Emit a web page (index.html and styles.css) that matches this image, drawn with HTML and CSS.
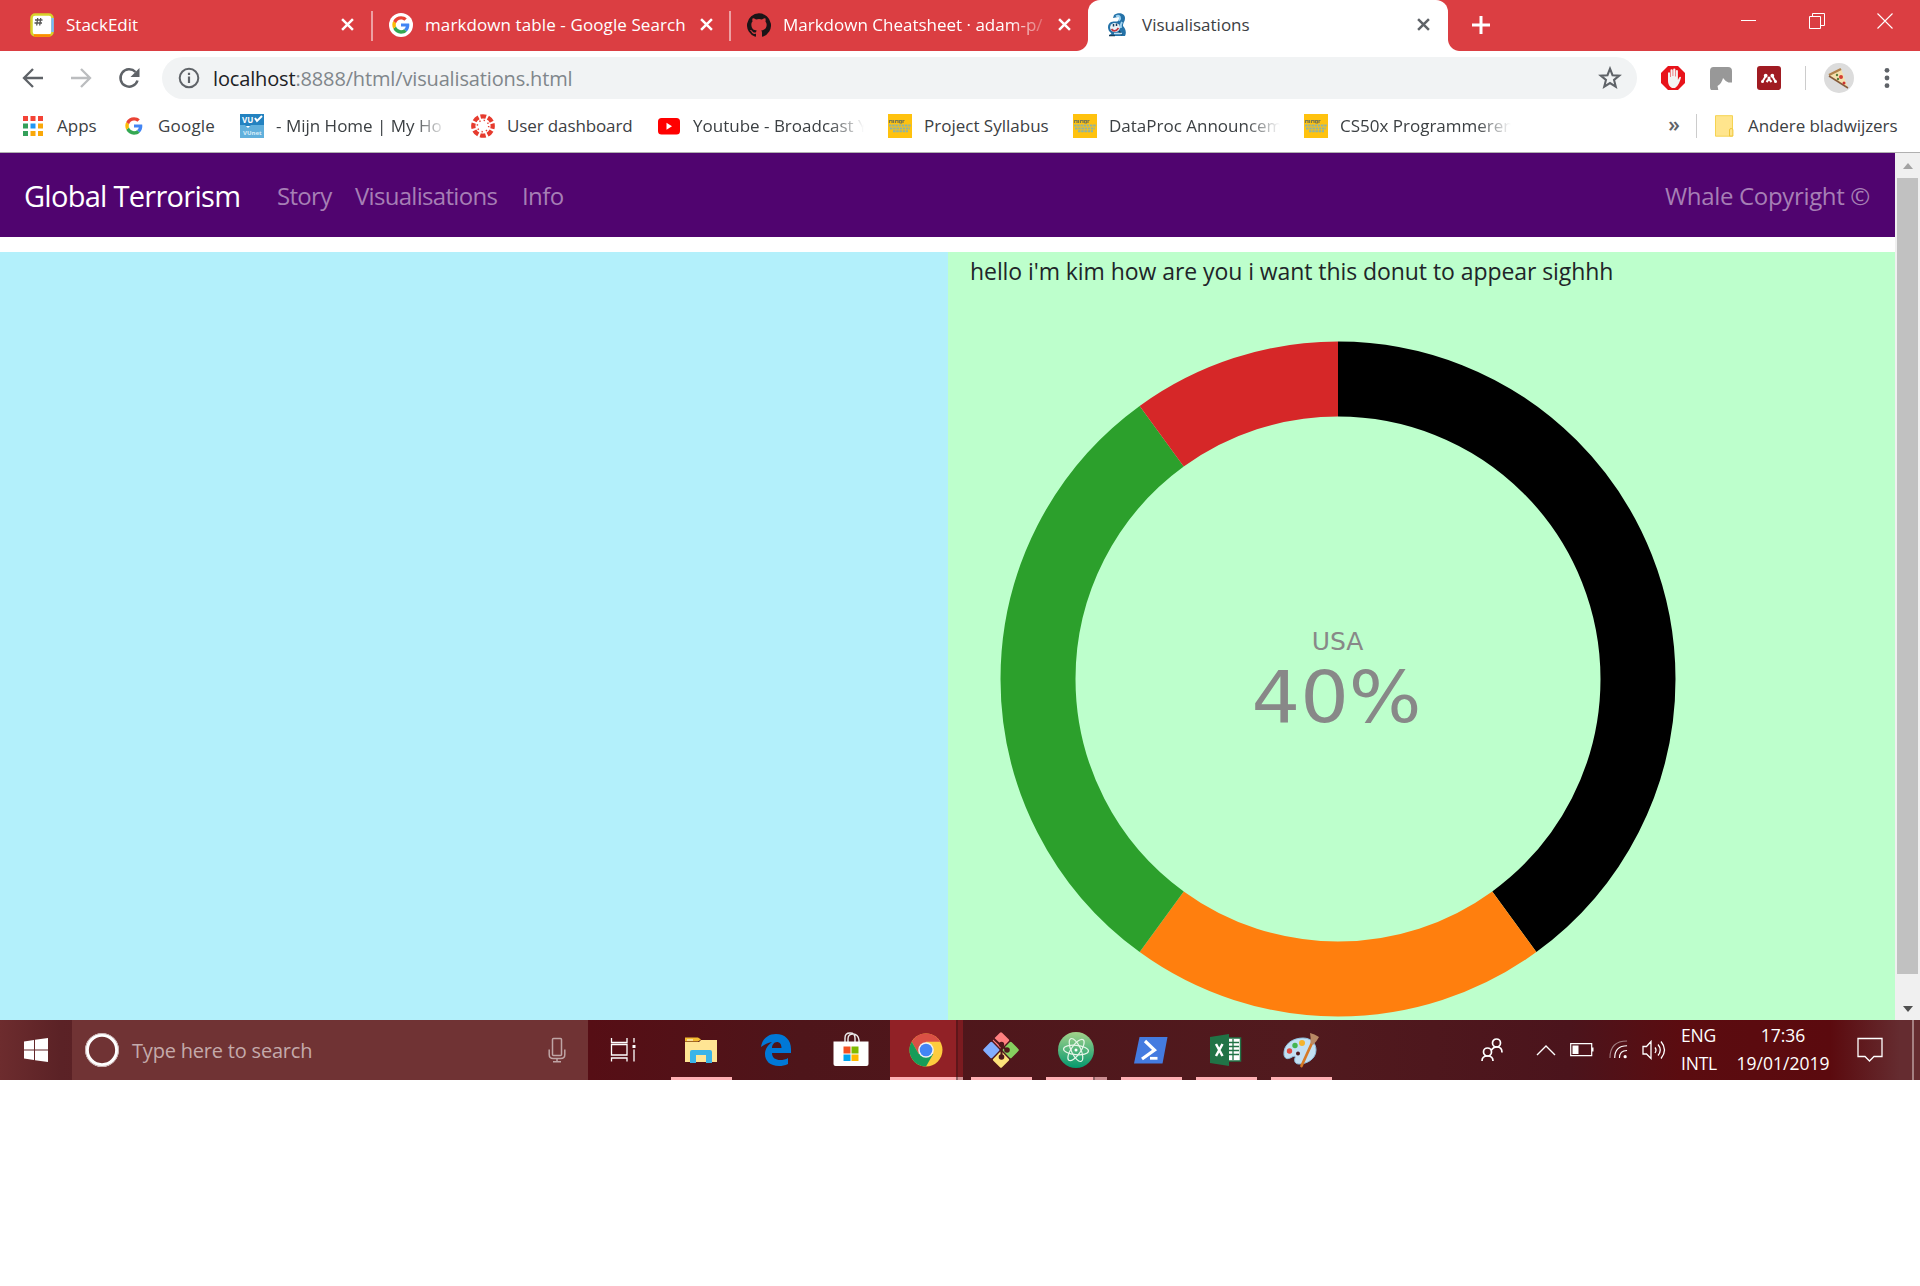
FILE: index.html
```html
<!DOCTYPE html>
<html lang="en">
<head>
<meta charset="utf-8">
<title>Visualisations</title>
<link rel="stylesheet" href="styles.css">
</head>
<body>
<svg class="defs" width="0" height="0">
  <defs>
    <symbol id="google" viewBox="0 0 48 48">
      <path fill="#4285f4" d="M45 24.500c0-1.600-.1-2.700-.4-4H24v7.500h12c-.3 2-1.600 4.900-4.500 6.900l6.900 5.400C42.600 36.500 45 31 45 24.500z"/>
      <path fill="#34a853" d="M24 46c6 0 11-2 14.500-5.700l-6.900-5.400c-1.900 1.300-4.300 2.200-7.600 2.200-5.800 0-10.700-3.900-12.500-9.200l-7.100 5.500C8 40.800 15.400 46 24 46z"/>
      <path fill="#fbbc05" d="M11.500 27.900c-.5-1.300-.7-2.800-.7-4.300s.3-2.900.7-4.300l-7.100-5.500C2.900 16.700 2 20 2 23.600s.9 6.900 2.400 9.800z"/>
      <path fill="#ea4335" d="M24 10.200c4.100 0 6.900 1.800 8.500 3.300l6.100-6C34.900 4 30 2 24 2 15.400 2 8 6.900 4.400 14l7.100 5.500C13.300 14.100 18.200 10.200 24 10.200z"/>
    </symbol>
    <symbol id="close" viewBox="0 0 12 12"><path d="M1 1l10 10M11 1L1 11" fill="none" stroke="currentColor" stroke-width="2.300"/></symbol>
    <symbol id="minor" viewBox="0 0 24 24">
      <path fill="#ffc20e" d="M0 0h24v24H0z"/>
      <path d="M1.500 9V6.500h2.500V9M5.500 6v3M7.500 9V6.500H10V9M11.500 9V6.500h2V9h-2M15 9V6.500h1.500" fill="none" stroke="#7d7a4c" stroke-width="1.200"/>
      <path d="M1 11.500h22M2 14.500h20M5 17.200h15" stroke="#8fb3a5" stroke-width="1.900" stroke-dasharray="2.500 .7"/>
    </symbol>
  </defs>
</svg>

<header class="tabs">
  <div class="tab">
    <svg class="fav" viewBox="0 0 24 24"><rect x="1.500" y="1.500" width="21" height="21" rx="3.500" fill="#fff" stroke="#d6d32b" stroke-width="2.500"/><path d="M22.500 5v14" stroke="#75b7fd" stroke-width="2.500"/><path d="M4 22.500h16.500" stroke="#ff8a00" stroke-width="2.500"/><path d="M5 7h7.500M4.500 10H12M7.700 5l-1 7.500M10.700 5l-1 7.500" stroke="#555" stroke-width="1.300"/></svg>
    <span class="title">StackEdit</span><svg class="x"><use href="#close"/></svg>
  </div>
  <div class="tab">
    <svg class="fav" viewBox="0 0 24 24"><circle cx="12" cy="12" r="12" fill="#fff"/><use href="#google" x="2.500" y="2.500" width="19" height="19"/></svg>
    <span class="title search-title">markdown table - Google Search</span><svg class="x"><use href="#close"/></svg>
  </div>
  <div class="tab last">
    <svg class="fav" viewBox="0 0 16 16"><path fill="#1b1417" d="M8 .2a8 8 0 0 0-2.500 15.600c.4.100.500-.2.500-.4v-1.500c-2 .4-2.600-.5-2.800-1-.1-.2-.5-.9-.8-1.100-.3-.2-.7-.5 0-.5.600 0 1.100.6 1.200.8.700 1.200 1.900.9 2.400.7.100-.5.300-.9.500-1.100-1.800-.2-3.600-.9-3.600-4 0-.9.300-1.600.8-2.100-.1-.2-.4-1 .1-2.100 0 0 .7-.2 2.200.8a7.400 7.400 0 0 1 4 0c1.500-1 2.200-.8 2.200-.8.400 1.100.2 1.900.1 2.100.5.600.8 1.300.8 2.100 0 3.100-1.900 3.700-3.700 4 .3.200.6.700.6 1.500v2.200c0 .2.100.5.500.4A8 8 0 0 0 8 .2z"/></svg>
    <span class="title fade-title">Markdown Cheatsheet · adam-p/</span><svg class="x"><use href="#close"/></svg>
  </div>
  <div class="tab active">
    <svg class="fav" viewBox="0 0 24 24"><path d="M8 2c4-3 11-2 11 3 0 4-2 4-2 8 2 2 4 6 2 10H3c1-2 3-2 2-3-4-3-4-9 0-11 4-1 6 0 7-1 2-2 2-4 0-4S9 5 7 5z" fill="#2472a8"/><path d="M10 3.500c4-2 5 2 3 4M16 9q-2 3-1 6" stroke="#9fd3f2" stroke-width="2" fill="none"/><ellipse cx="9" cy="14.500" rx="5" ry="4.500" fill="#e8f2f7"/><path d="M5.500 16c2 3 5 2 7-1" stroke="#c2343d" stroke-width="1.700" fill="none"/><path d="M7.500 11v2.500M10.500 10.500v2.500M3 22.500h6M13 18l3 4" stroke="#173e5c" stroke-width="1.500"/><path d="M8 20.500h8" stroke="#bfe0f3" stroke-width="1.500"/></svg>
    <span class="title">Visualisations</span><svg class="x"><use href="#close"/></svg>
  </div>
  <div class="new-tab"><svg viewBox="0 0 18 18"><path d="M9 0v18M0 9h18" stroke="#fff" stroke-width="3"/></svg></div>
  <div class="window">
    <svg viewBox="0 0 16 16"><path d="M0 7.500h15" stroke="#fff"/></svg>
    <svg viewBox="0 0 16 16"><path d="M.5 3.500h11v12H.5zM3.500 3V.5h12v12H12" fill="none" stroke="#fff"/></svg>
    <svg viewBox="0 0 16 16"><path d="M.5 .5l15 15M15.500 .5l-15 15" stroke="#fff" stroke-width="1.100"/></svg>
  </div>
</header>

<div class="toolbar">
  <svg class="nav-icon" viewBox="0 0 24 24"><path d="M22 12H3.500M12 3l-9 9 9 9" fill="none" stroke="#5f6368" stroke-width="2.300"/></svg>
  <svg class="nav-icon" viewBox="0 0 24 24"><path d="M2 12h18.500M12 3l9 9-9 9" fill="none" stroke="#bbbdbf" stroke-width="2.300"/></svg>
  <svg class="nav-icon" viewBox="0 0 24 24"><path d="M20.500 14.500A8.700 8.700 0 1 1 18.500 6" fill="none" stroke="#5f6368" stroke-width="2.500"/><path d="M22.500 2v9h-9z" fill="#5f6368"/></svg>
  <div class="address">
    <svg class="info" viewBox="0 0 22 22"><circle cx="11" cy="11" r="9.300" fill="none" stroke="#5f6368" stroke-width="2"/><path d="M11 9.500v6.500M11 5.700v2.200" stroke="#5f6368" stroke-width="2.200"/></svg>
    <span class="url"><b>localhost</b>:8888/html/visualisations.html</span>
    <svg class="star" viewBox="0 0 22 22"><path d="M11 2.500l2.300 5.900 6.200.4-4.800 4 1.600 6.200L11 15.600 5.700 19l1.600-6.200-4.800-4 6.200-.4z" fill="none" stroke="#5f6368" stroke-width="1.900"/></svg>
  </div>
  <div class="extensions">
    <svg viewBox="0 0 24 24"><path d="M7 0h10l7 7v10l-7 7H7l-7-7V7z" fill="#e8131a"/><path d="M7 15V7.200a1 1 0 0 1 2 0V11h.5V4.300a1.100 1.100 0 0 1 2.200 0V10h.5V3.500a1.100 1.100 0 0 1 2.200 0V10.500h.5V5a1 1 0 0 1 2 0v9l1.300-2.500q1-1.200 1.800-.2-.6 3-2 6T14 22h-3q-4-2-4-7z" fill="#f4f4f4"/></svg>
    <svg viewBox="0 0 24 24"><path d="M4.500 1H19q4 0 4 4v11.500h-3.500q-3-1-5.500-4.500-1 5-5.500 8l1 5H5q-4 0-4-4V5q0-4 3.500-4z" fill="#989898"/></svg>
    <svg viewBox="0 0 24 24"><rect width="24" height="24" rx="3" fill="#a01b22"/><g fill="#fff"><circle cx="8.700" cy="9.700" r="1.900"/><circle cx="15.300" cy="9.700" r="1.900"/><circle cx="12" cy="12" r="1.500"/><circle cx="5.500" cy="15.500" r="1.500"/><circle cx="18.500" cy="15.500" r="1.500"/></g><path d="M5.500 15.500l3-5M18.500 15.500l-3-5M9.500 16l2.500-3 2.500 3" fill="none" stroke="#fff" stroke-width="2"/></svg>
    <i class="rule"></i>
    <svg class="avatar" viewBox="0 0 30 30"><circle cx="15" cy="15" r="15" fill="#dcdcdc"/><path d="M5 12l12-6 7 19z" fill="#f4e1ae"/><path d="M5 12l12-6" stroke="#b1834b" stroke-width="2.500"/><path d="M5 13l19 12" stroke="#865a39" stroke-width="1.500"/><circle cx="17" cy="14" r="2" fill="#d43d35"/><circle cx="20" cy="20" r="1.500" fill="#c33"/><circle cx="13" cy="12" r="1.200" fill="#597e3d"/><circle cx="14" cy="16" r="1.200" fill="#597e3d"/></svg>
    <svg class="dots" viewBox="0 0 6 22"><g fill="#5f6368"><circle cx="3" cy="3.300" r="2.400"/><circle cx="3" cy="11" r="2.400"/><circle cx="3" cy="18.700" r="2.400"/></g></svg>
  </div>
</div>

<nav class="bookmarks">
  <a><svg viewBox="0 0 24 24"><g><path fill="#f44336" d="M2 2h5v5H2zM9.500 2h5v5h-5zM17 2h5v5h-5z"/><path fill="#34a05a" d="M2 9.500h5v5H2zM2 17h5v5H2z"/><path fill="#2196f3" d="M9.500 9.500h5v5h-5z"/><path fill="#f9a80a" d="M17 9.500h5v5h-5zM9.500 17h5v5h-5zM17 17h5v5h-5z"/></g></svg><span>Apps</span></a>
  <a><svg viewBox="0 0 24 24"><use href="#google" x="2.500" y="2.500" width="19" height="19"/></svg><span class="wide">Google</span></a>
  <a class="fade"><svg viewBox="0 0 24 24"><path fill="#2382c0" d="M0 0h24v12H0z"/><path fill="#61b0dc" d="M0 11h5l3 3 3-3h13v13H0z"/><text x="2" y="8.500" class="vu">VU</text><path d="M15 4l2 3 5-5" stroke="#fff" stroke-width="2" fill="none"/><text x="3" y="20.500" class="vunet">VUnet</text></svg><span>- Mijn Home | My Ho</span></a>
  <a><svg viewBox="0 0 24 24"><circle cx="12" cy="12" r="9.700" fill="none" stroke="#e63b2e" stroke-width="4.300" stroke-dasharray="5.600 2.018" stroke-dashoffset="2.800"/><circle cx="12" cy="12" r="5.700" fill="none" stroke="#e63b2e" stroke-width="1.500" stroke-dasharray="1.300 3.177"/></svg><span class="tight">User dashboard</span></a>
  <a class="fade"><svg viewBox="0 0 24 24"><rect x="1" y="4" width="22" height="16.500" rx="3.500" fill="#f00"/><path d="M9.500 8.700v7l5.500-3.500z" fill="#fff"/></svg><span>Youtube - Broadcast Y</span></a>
  <a><svg viewBox="0 0 24 24"><use href="#minor"/></svg><span>Project Syllabus</span></a>
  <a class="fade"><svg viewBox="0 0 24 24"><use href="#minor"/></svg><span>DataProc Announcem</span></a>
  <a class="fade"><svg viewBox="0 0 24 24"><use href="#minor"/></svg><span>CS50x Programmeren</span></a>
  <div class="more">»</div>
  <a class="other"><svg viewBox="0 0 24 24"><path d="M3.500 1.700h17v20.500h-17z" fill="#ffe58d" stroke="#f5d352" stroke-width="1"/><path d="M17.500 22v-6q0-1.500 1.700-1.500t1.700 1.500v6z" fill="#ffe58d" stroke="#eec63c"/></svg><span>Andere bladwijzers</span></a>
</nav>

<div class="viewport">
  <main class="page">
    <nav class="navbar">
      <a class="brand">Global Terrorism</a>
      <a class="n1">Story</a><a class="n2">Visualisations</a><a class="n3">Info</a>
      <a class="copy">Whale Copyright ©</a>
    </nav>
    <div class="columns">
      <section class="left"></section>
      <section class="right">
        <p>hello i'm kim how are you i want this donut to appear sighhh</p>
        <svg class="donut" viewBox="0 0 676 676">
          <g fill="none" stroke-width="75" transform="rotate(-90 338 338)">
            <circle cx="338" cy="338" r="300" pathLength="100" stroke="#000" stroke-dasharray="40 60"/>
            <circle cx="338" cy="338" r="300" pathLength="100" stroke="#ff7f0e" stroke-dasharray="20 80" stroke-dashoffset="-40"/>
            <circle cx="338" cy="338" r="300" pathLength="100" stroke="#2ca02c" stroke-dasharray="30 70" stroke-dashoffset="-60"/>
            <circle cx="338" cy="338" r="300" pathLength="100" stroke="#d62728" stroke-dasharray="10 90" stroke-dashoffset="-90"/>
          </g>
          <text class="country" x="337.500" y="309">USA</text>
          <text class="percent" x="336.500" y="381" textLength="170" lengthAdjust="spacingAndGlyphs">40%</text>
        </svg>
      </section>
    </div>
  </main>
  <aside class="scrollbar"><i class="up"></i><i class="thumb"></i><i class="down"></i></aside>
</div>

<footer class="taskbar">
  <div class="start"><svg viewBox="0 0 24 24" width="24" height="24"><path fill="#fff" d="M0 3.400l10-1.400v9.500H0zM11 1.800L24 0v11.500H11zM0 12.500h10V22L0 20.600zM11 12.500h13V24l-13-1.800z"/></svg></div>
  <div class="search">
    <svg viewBox="0 0 36 36" width="36" height="36"><circle cx="18" cy="18" r="15" fill="none" stroke="#fff" stroke-width="3.700"/><circle cx="18" cy="18" r="16.500" fill="none" stroke="#cbb3b3" stroke-width="1"/></svg>
    <span>Type here to search</span>
    <svg class="mic" viewBox="0 0 18 26" width="18" height="26"><rect x="4.500" y="1.500" width="9" height="17" rx="1" fill="none" stroke="#bfa5a5" stroke-width="1.500"/><path d="M1.200 12.500v5q0 4 4 4h7.600q4 0 4-4v-5M9 21.500V25M5 24.700h8" fill="none" stroke="#bfa5a5" stroke-width="1.500"/></svg>
  </div>
  <div class="app task-view"><svg viewBox="0 0 36 36"><path d="M5.500 6v4.500h15.500V6M5.500 29.500V26h15.500v3.500M5.500 12.500h15.500v10.500H5.500zM28 6v4.500M28 17.500v12" fill="none" stroke="#fff" stroke-width="1.300"/><path fill="#fff" d="M26.500 13h3v3h-3z"/></svg></div>
  <div class="app open"><svg viewBox="0 0 36 36"><path fill="#f4bd32" d="M2 5.500h13l3 2-3 2H2z"/><path fill="#ffe594" d="M2 10h14l2-2h16v22H2z"/><path d="M4 8h6" stroke="#fff"/><path d="M7 31V20q0-2 2-2h18q2 0 2 2v11h-6v-8H13v8z" fill="#3ab4e8"/></svg></div>
  <div class="app"><svg viewBox="0 0 36 36"><path fill="#0078d7" fill-rule="evenodd" d="M3 15C4 7 10 2 18 2c9 0 15 6 15 15v4H14c0 5 4 7 8 7 3 0 6-.5 8-2v6c-3 1.500-6 2-9 2-9 0-14-5-14-12 0-5 3-9 7-12-5 1-8 3-11 5zM14 16h9.500c0-4-2-6-4.500-6-3 0-5 3-5 6z"/></svg></div>
  <div class="app"><svg viewBox="0 0 36 36"><path d="M12 10V6q0-5 5-5t5 5v4M15 10V7q0-5 5-5t6 6v2" fill="none" stroke="#eee" stroke-width="1.400"/><path fill="#fff" d="M.5 9.500h35V32q0 2-2 2h-31q-2 0-2-2z"/><path fill="#f25022" d="M10.500 14.500h7v7h-7z"/><path fill="#7fba00" d="M18.500 14.500h7v7h-7z"/><path fill="#00a4ef" d="M10.500 22.500h7v6.500h-7z"/><path fill="#ffb900" d="M18.500 22.500h7v6.500h-7z"/></svg></div>
  <div class="app current"><svg viewBox="0 0 36 36"><circle cx="18" cy="18" r="16.500" fill="#fdcc3e"/><path fill="#da5045" d="M3.700 9.700A16.500 16.500 0 0 1 32.300 9.700H18L10.800 22z"/><path fill="#179c59" d="M3.700 9.700a16.500 16.500 0 0 0 14.300 24.800l7.200-12.400L10.800 22z"/><circle cx="18" cy="18" r="7.800" fill="#f1f1f1"/><circle cx="18" cy="18" r="6.300" fill="#4285f4"/></svg></div>
  <div class="app open"><svg viewBox="0 0 36 36"><g transform="rotate(45 18 18)"><rect x="5" y="5" width="12.300" height="12.300" rx="1.500" fill="#82aeff" transform="translate(0 13.700)"/><rect x="5" y="5" width="12.300" height="12.300" rx="1.500" fill="#ff8080"/><rect x="18.700" y="5" width="12.300" height="12.300" rx="1.500" fill="#86cf5f"/><rect x="18.700" y="18.700" width="12.300" height="12.300" rx="1.500" fill="#fde27a"/></g><path d="M10.500 6.500l7.500 7 6 4.500M18.500 12v13" fill="none" stroke="#4e171b" stroke-width="2"/><g fill="#4e171b"><circle cx="18.500" cy="12.500" r="2.700"/><circle cx="18.500" cy="25" r="2.800"/><circle cx="24" cy="18" r="2.800"/></g></svg></div>
  <div class="app open group"><svg viewBox="0 0 36 36"><defs><linearGradient id="atom" x2="0" y2="1"><stop stop-color="#a3d28b"/><stop offset="1" stop-color="#04996e"/></linearGradient></defs><circle cx="18" cy="18" r="18" fill="url(#atom)"/><g fill="none" stroke="#e6f5e8" stroke-width="1.200"><ellipse cx="18" cy="18" rx="12.500" ry="4.700" transform="rotate(5 18 18)"/><ellipse cx="18" cy="18" rx="12.500" ry="4.700" transform="rotate(65 18 18)"/><ellipse cx="18" cy="18" rx="12.500" ry="4.700" transform="rotate(125 18 18)"/></g><circle cx="18" cy="18" r="1.500" fill="#fff"/></svg></div>
  <div class="app open"><svg viewBox="0 0 36 36"><path fill="#447be0" d="M6.500 5h28L29.500 31.500H1z"/><path d="M12 9l9.500 9L9 27" fill="none" stroke="#fff" stroke-width="3.200"/><path d="M17 26.300h7.500" stroke="#fff" stroke-width="2.800"/></svg></div>
  <div class="app open"><svg viewBox="0 0 36 36"><path fill="#fff" stroke="#207346" stroke-width="1.500" d="M18 6h14.500v23H18z"/><path d="M20 10.500h11M20 14.500h11M20 18.500h11M20 22.500h11M25 7v21" stroke="#207346" stroke-width="1.300"/><path fill="#207346" d="M2 5l19-3v32L2 31z"/><path d="M8 12l6.500 12M14.500 12L8 24" stroke="#fff" stroke-width="2.500"/></svg></div>
  <div class="app open"><svg viewBox="0 0 36 36"><path fill="#c3e0f3" stroke="#8fc0df" stroke-width="1" d="M1 23C0 12 10 6 20 6c8 0 13 5 13 12 0 9-9 14-17 14-4 0-5-3-4-6 1-2-1-2-3-1-3 2-7 3-8-2z"/><circle cx="6.500" cy="19" r="2.700" fill="#e04b3f"/><circle cx="12" cy="13.500" r="2.700" fill="#45b551"/><circle cx="19" cy="11" r="3" fill="#f5b32c"/><circle cx="15" cy="21.500" r="2" fill="#4e171b"/><path d="M28.500 12L18.500 34" stroke="#d67a26" stroke-width="2.700" stroke-linecap="round"/><path d="M27 1l4.500 1.500L36 5q-2 4-6 8l-2.500-1.500Q28 6 27 1z" fill="#b98964"/></svg></div>
  <div class="tray">
    <svg class="people" viewBox="0 0 22 24"><g fill="none" stroke="#fff" stroke-width="1.700"><circle cx="15.500" cy="5" r="4"/><circle cx="6.500" cy="14" r="4"/><path d="M1 23q0-5 5.500-5t5.500 5M10 12.500q3-4 6-3.500 5 0 5 5.500"/></g></svg>
    <svg class="chev" viewBox="0 0 20 12"><path d="M1 11l9-9 9 9" fill="none" stroke="#fff" stroke-width="1.400"/></svg>
    <svg class="batt" viewBox="0 0 24 14"><path d="M.7.700h21v12H.7z" fill="none" stroke="#fff" stroke-width="1.200"/><path fill="#fff" d="M2.500 2.500h6v8.500h-6zM22 4.500h1.500v4H22z"/></svg>
    <svg class="wifi" viewBox="0 0 20 20"><g fill="none" stroke="#fff" stroke-width="1.200"><path opacity=".45" d="M1 19Q1 1 19 1"/><path d="M6 19Q6 6 19 6M11 19q0-8 8-8"/></g><circle cx="17" cy="17.500" r="1.700" fill="#fff"/></svg>
    <svg class="vol" viewBox="0 0 24 20"><g fill="none" stroke="#fff" stroke-width="1.300"><path d="M1 6.500h3.500L9 1.500v17L4.500 14H1zM13 7.500q2 2.500 0 5.500M16 4.500q4.500 5.500 0 11M19 1.500q7 8.500 0 17"/></g></svg>
    <div class="stack lang"><span>ENG</span><span>INTL</span></div>
    <div class="stack clock"><span>17:36</span><span>19/01/2019</span></div>
    <svg class="note" viewBox="0 0 26 26"><path d="M1 1.500h24v18h-8l-4.500 4.500L8 19.500H1z" fill="none" stroke="#fff" stroke-width="1.300"/></svg>
    <i class="peek"></i>
  </div>
</footer>
</body>
</html>
```
FILE: styles.css
```css
* { box-sizing: border-box; }
body { margin: 0; background: #fff; font-family: "Open Sans", "Noto Sans", sans-serif; color: #3c4043; overflow: hidden; }
.defs { display: block; position: absolute; }
svg { display: block; flex: none; }
span, a { white-space: nowrap; }

.tabs { display: flex; height: 51px; background: #db3e42; color: #fff; align-items: stretch; }
.tab { display: flex; align-items: center; width: 358px; padding: 0 18px 2px 30px; }
.tab:first-child { width: 373px; padding-right: 19px; }
.tab:first-child, .tab:nth-child(2) { background: linear-gradient(#eda0a2, #eda0a2) no-repeat right 11px / 2px 30px; }
.tab:nth-child(2) { padding-left: 16px; }
.tab.last { width: 357px; padding-left: 16px; padding-right: 17px; background: radial-gradient(circle at 0 0, transparent 11.500px, #fff 12.500px) no-repeat right bottom / 12px 12px; }
.tab.active { width: 360px; padding-left: 18px; background: #fff; color: #3c4043; border-radius: 12px 12px 0 0; }
.fav { width: 24px; height: 24px; margin-right: 12px; }
.title { flex: 1; min-width: 0; font-size: 17px; line-height: 24px; margin-right: 11px; }
.search-title { letter-spacing: .1px; }
.fade-title { mask-image: linear-gradient(90deg, #000 86%, rgba(0, 0, 0, .2) 99%); }
.x { width: 13px; height: 13px; }
.active .x { color: #5f6368; }
.new-tab { padding: 16px 0 0 24px; background: radial-gradient(circle at 100% 0, transparent 11.500px, #fff 12.500px) no-repeat left bottom / 12px 12px; }
.new-tab svg { width: 18px; height: 18px; }
.window { display: flex; margin-left: auto; gap: 52px; padding: 13px 27px 0 0; }
.window svg { width: 16px; height: 16px; }

.toolbar { display: flex; align-items: center; height: 54px; padding: 0 30px 0 21px; }
.nav-icon { width: 24px; height: 24px; margin-right: 24px; }
.address { display: flex; align-items: center; width: 1476px; height: 42px; border-radius: 21px; background: #f1f3f4; padding: 0 15px 0 16px; margin-left: -3px; }
.info { width: 22px; height: 22px; }
.url { flex: 1; margin-left: 13px; font-size: 20px; letter-spacing: -.15px; color: #80868b; }
.url b { font-weight: 400; color: #202124; }
.star { width: 24px; height: 24px; }
.extensions { display: flex; align-items: center; flex: 1; padding-left: 24px; }
.extensions svg { width: 24px; height: 24px; margin-right: 24px; }
.extensions .rule { width: 1px; height: 24px; background: #ccc; margin-right: 18px; }
.extensions .avatar { width: 30px; height: 30px; margin-right: 30px; }
.extensions .dots { width: 6px; height: 22px; margin: 0; }

.bookmarks { display: grid; grid-template-columns: 101px 118px 231px 186px 231px 185px 231px 206px 1fr 208px; align-items: center; height: 48px; padding: 0 16px 6px 21px; border-bottom: 1px solid #b0b0b0; }
.bookmarks a { display: flex; align-items: center; gap: 12px; min-width: 0; font-size: 17px; }
.bookmarks a > svg { width: 24px; height: 24px; }
.bookmarks .wide { letter-spacing: .2px; }
.bookmarks .tight { letter-spacing: -.12px; }
.fade > span { width: 171px; mask-image: linear-gradient(90deg, #000 80%, transparent); }
.vu { font: 700 8px "Open Sans", sans-serif; fill: #fff; }
.vunet { font: 700 6px "Open Sans", sans-serif; fill: #d9edf8; }
.more { justify-self: end; font-size: 21px; line-height: 24px; font-weight: 600; padding: 0 16px 3px 0; color: #5f6368; }
.bookmarks .other { border-left: 1px solid #ccc; padding-left: 15px; letter-spacing: -.08px; }

.viewport { display: flex; height: 867px; }
.page { width: 1895px; overflow: hidden; }
.navbar { display: flex; align-items: center; height: 84px; background: #50046f; padding: 0 25px 0 24px; font-size: 24px; letter-spacing: -.7px; color: #a67fb5; }
.brand { color: #fff; font-size: 29px; letter-spacing: -.72px; width: 253px; }
.n1 { width: 78px; }
.n2 { width: 167px; }
.n3 { letter-spacing: -.6px; }
.copy { margin-left: auto; letter-spacing: -.33px; }
.columns { display: flex; height: 768px; margin-top: 15px; }
.left { width: 948px; background: #b3f0fb; }
.right { flex: 1; background: #bdffcc; padding-left: 22px; }
.right p { margin: 0; height: 89px; font-size: 23px; line-height: 38px; letter-spacing: -.07px; color: #212529; }
.donut { width: 676px; height: 676px; margin-left: 29.500px; }
.country, .percent { font-family: "DejaVu Sans", sans-serif; text-anchor: middle; fill: #888; }
.country { font-size: 25px; }
.percent { font-size: 72px; }
.scrollbar { display: flex; flex-direction: column; align-items: center; width: 25px; background: #f0f0f0; }
.up { width: 0; border: 5.500px solid transparent; border-top: 0; border-bottom: 6px solid #a3a3a3; margin: 10px 0 9px; }
.thumb { width: 21px; height: 796px; background: #c1c1c1; }
.down { width: 0; border: 5.500px solid transparent; border-bottom: 0; border-top: 6px solid #505050; margin-top: 32px; }

.taskbar { display: flex; height: 60px; background: linear-gradient(90deg, #6d2c2e 0, #5b2226 60px, #560e15 590px, #4e151a 800px, #511a1e 1300px, #4b141c 1570px, #5b0c10 1680px, #5b0a0e 1830px, #652c30 1900px); color: #fff; }
.start { width: 72px; padding: 18px 24px; }
.search { display: flex; align-items: center; width: 516px; background: #703334; padding: 0 22px 0 12px; color: #c4aaab; font-size: 20px; letter-spacing: -.2px; }
.search span { flex: 1; margin-left: 12px; }
.app { display: flex; justify-content: center; align-items: center; width: 75px; padding-bottom: 1px; }
.task-view { padding-right: 3px; }
.app svg { width: 36px; height: 36px; }
.open { background: linear-gradient(#ffb0b4, #ffb0b4) no-repeat 8px 57px / 61px 3px; }
.group { background: linear-gradient(90deg, #ffb0b4 47px, #8d6468 47px 49px, #cc8e92 49px) no-repeat 8px 57px / 61px 3px; }
.current { background: linear-gradient(90deg, #ffb0b4 66px, #8e6467 66px 68px, #d19497 68px) no-repeat 2px 57px / 73px 3px, linear-gradient(90deg, transparent 2px, #912126 2px 68px, #5e161a 68px 70px, #7b1b20 70px); }
.tray { display: flex; align-items: center; flex: 1; padding-bottom: 1px; }
.people { width: 22px; height: 24px; margin-left: 143px; }
.chev { width: 20px; height: 12px; margin-left: 33px; }
.batt { width: 24px; height: 14px; margin-left: 14px; }
.wifi { width: 19px; height: 19px; margin-left: 15px; }
.vol { width: 24px; height: 20px; margin-left: 14px; }
.stack { display: flex; flex-direction: column; align-items: center; font-size: 17.500px; line-height: 27.500px; }
.lang { margin-left: 15px; width: 36px; align-items: flex-start; letter-spacing: -.2px; }
.clock { margin-left: 18px; width: 96px; }
.note { width: 26px; height: 26px; margin-left: 26px; }
.peek { width: 2px; height: 60px; background: #a58082; margin: 0 6px -1px auto; }
```
